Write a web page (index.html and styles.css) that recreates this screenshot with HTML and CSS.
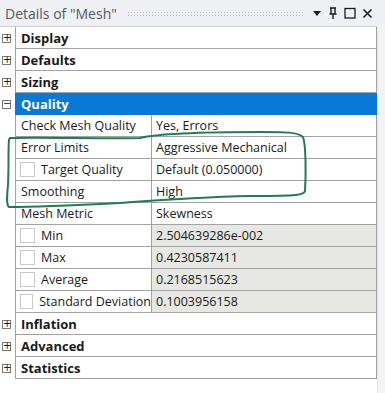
FILE: index.html
```html
<!DOCTYPE html>
<html lang="en">
<head>
  <meta charset="UTF-8">
  <title>Details of "Mesh"</title>
  <link rel="stylesheet" href="styles.css">
</head>
<body>
  <div class="window">
    <div class="titlebar">
      <span class="title">Details of "Mesh"</span>
      <span class="grip"></span>
      <svg class="tb-icon" width="10" height="10" viewBox="0 0 10 10"><path d="M1 3h8L5 8z" fill="#1a1a1a"/></svg>
      <svg class="tb-icon" width="10" height="12" viewBox="0 0 10 12"><path d="M2 1h6M3 1v6M7 1v6M1.5 7h7M5 7v5" stroke="#1a1a1a" stroke-width="1.4" fill="none"/></svg>
      <svg class="tb-icon" width="12" height="12" viewBox="0 0 12 12"><rect x="1" y="1.5" width="10" height="9.5" stroke="#1a1a1a" stroke-width="1.3" fill="none"/></svg>
      <svg class="tb-icon" width="11" height="11" viewBox="0 0 11 11"><path d="M1.5 1.5l8 8M9.5 1.5l-8 8" stroke="#1a1a1a" stroke-width="1.6"/></svg>
    </div>

    <div class="body">
      <div class="grid">
        <div class="row group"><span class="toggle">+</span><div class="cell wide">Display</div></div>
        <div class="row group"><span class="toggle">+</span><div class="cell wide">Defaults</div></div>
        <div class="row group"><span class="toggle">+</span><div class="cell wide">Sizing</div></div>
        <div class="row group open"><span class="toggle">&minus;</span><div class="cell wide selected">Quality</div></div>

        <div class="row"><span></span><div class="cell name">Check Mesh Quality</div><div class="cell value">Yes, Errors</div></div>
        <div class="row"><span></span><div class="cell name">Error Limits</div><div class="cell value">Aggressive Mechanical</div></div>
        <div class="row"><span></span><div class="cell name"><span class="check"></span>Target Quality</div><div class="cell value">Default (0.050000)</div></div>
        <div class="row"><span></span><div class="cell name">Smoothing</div><div class="cell value">High</div></div>
        <div class="row"><span></span><div class="cell name">Mesh Metric</div><div class="cell value">Skewness</div></div>
        <div class="row"><span></span><div class="cell name"><span class="check"></span>Min</div><div class="cell value readonly">2.504639286e-002</div></div>
        <div class="row"><span></span><div class="cell name"><span class="check"></span>Max</div><div class="cell value readonly">0.4230587411</div></div>
        <div class="row"><span></span><div class="cell name"><span class="check"></span>Average</div><div class="cell value readonly">0.2168515623</div></div>
        <div class="row"><span></span><div class="cell name"><span class="check"></span>Standard Deviation</div><div class="cell value readonly">0.1003956158</div></div>

        <div class="row group"><span class="toggle">+</span><div class="cell wide">Inflation</div></div>
        <div class="row group"><span class="toggle">+</span><div class="cell wide">Advanced</div></div>
        <div class="row group"><span class="toggle">+</span><div class="cell wide">Statistics</div></div>
      </div>
      <div class="scrollbar"></div>
    </div>

    <!-- hand-drawn marker loop around the error/smoothing rows -->
    <svg class="annotation" width="320" height="90" viewBox="0 0 320 90">
      <path d="M10 13 C 40 12, 110 14, 140 13 C 160 8, 220 7, 262 7 C 285 7, 298 7, 303 12 C 306 20, 306 50, 305 66 C 304 70, 300 71, 250 71 C 200 72, 160 75, 120 78 C 80 80, 30 82, 9 82 C 6 80, 7 70, 8 60 C 9 40, 8 25, 9 15 C 9 13, 10 13, 12 13" fill="none" stroke="#247a52" stroke-width="2" stroke-linecap="round"/>
    </svg>
  </div>
</body>
</html>
```

FILE: styles.css
```css
html, body {
  margin: 0;
  padding: 0;
  background: #ffffff;
}

body {
  font-family: "Open Sans", "Noto Sans", sans-serif;
  font-size: 12.5px;
  color: #1a1a1a;
}

.window {
  position: relative;
  width: 385px;
  height: 393px;
  overflow: hidden;
}

/* Title bar */
.titlebar {
  height: 26px;
  display: flex;
  align-items: center;
  gap: 6px;
  padding: 0 12px 0 5px;
  background: #eef0f3;
  box-sizing: border-box;
}

.title {
  font-size: 14px;
  color: #555a60;
  white-space: nowrap;
}

.grip {
  flex: 1;
  height: 5px;
  margin: 0 2px 0 4px;
  background-image: radial-gradient(circle, #b9bcc2 0.7px, transparent 0.9px);
  background-size: 3px 3px;
}

.tb-icon {
  flex: none;
}

/* Property grid */
.body {
  display: flex;
  height: 367px;
}

.grid {
  width: 378px;
  border-top: 1px solid #d0d0d0;
}

.row {
  display: grid;
  grid-template-columns: 15px 136px 1fr;
  height: 22px;
}

.row.group {
  grid-template-columns: 15px 1fr;
}

.toggle {
  align-self: center;
  justify-self: center;
  width: 9px;
  height: 9px;
  margin-left: -2px;
  border: 1px solid #7a7a7a;
  box-sizing: border-box;
  font-size: 10px;
  line-height: 6px;
  text-align: center;
  color: #1a1a1a;
  font-family: "DejaVu Sans", sans-serif;
}

.cell {
  display: flex;
  align-items: center;
  padding-left: 5px;
  border-bottom: 1px solid #a3a3a3;
  border-left: 1px solid #a3a3a3;
  border-right: 1px solid #a3a3a3;
  white-space: nowrap;
  overflow: hidden;
}

.cell.name {
  border-right: none;
}

.cell.value {
  padding-left: 4px;
}

.cell.wide {
  font-weight: bold;
  font-size: 13px;
}

.cell.selected {
  background: #0a78d7;
  color: #ffffff;
  border-color: #0a78d7;
}

.cell.readonly {
  background: #e7e7e3;
}

.check {
  width: 15px;
  height: 15px;
  margin: 0 6px 0 -1px;
  border: 1px solid #c9c9c9;
  box-sizing: border-box;
  background: #ffffff;
}

.scrollbar {
  width: 7px;
  background: #f3f3f5;
  border-left: 1px solid #e4e4e8;
}

.annotation {
  position: absolute;
  left: 0;
  top: 125px;
  pointer-events: none;
}
```
